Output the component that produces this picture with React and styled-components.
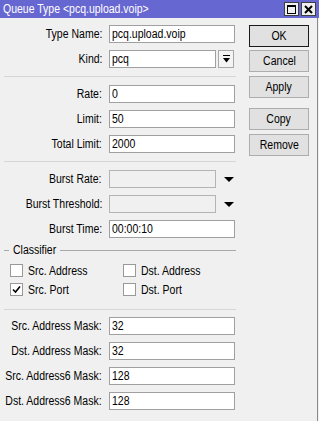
import React from "react";
import styled, { createGlobalStyle } from "styled-components";

const GlobalStyle = createGlobalStyle`
  html, body { margin: 0; padding: 0; background: #f0f0f0; }
  body {
    font-family: "Liberation Sans", Arial, sans-serif;
    font-size: 12.5px;
    color: #000;
  }
  * { box-sizing: border-box; }
`;

const Txt = styled.span`
  display: inline-block;
  white-space: nowrap;
  transform: scaleX(0.84);
  transform-origin: ${(p) => p.$origin || "left"} center;
`;

const Window = styled.div`
  width: 319px;
  height: 421px;
  display: flex;
  flex-direction: column;
  overflow: hidden;
`;

const TitleBar = styled.div`
  height: 18px;
  background: #6767d2;
  color: #fff;
  display: flex;
  align-items: center;
  padding-left: 3px;
  padding-right: 3px;
  flex-shrink: 0;
`;

const TitleText = styled.div`
  flex: 1;
  line-height: 18px;
  white-space: nowrap;
  overflow: hidden;
`;

const TitleButtons = styled.div`
  display: flex;
  gap: 2px;
`;

const TitleButton = styled.div`
  width: 15px;
  height: 14px;
  background: #f0f0f0;
  border: 1px solid #404040;
  display: flex;
  align-items: center;
  justify-content: center;
`;

const Body = styled.div`
  flex: 1;
  display: flex;
  width: 318px;
  border-right: 1px solid #8a8a8a;
`;

const Form = styled.div`
  width: 240px;
  padding-top: 7px;
  display: flex;
  flex-direction: column;
`;

const Row = styled.div`
  display: grid;
  grid-template-columns: 102px 1fr;
  column-gap: 7px;
  align-items: center;
  height: 18px;
  margin-top: ${(p) => p.$mt ?? 7}px;
`;

const Label = styled.div`
  display: flex;
  justify-content: flex-end;
  align-items: center;
  white-space: nowrap;
  height: 18px;
`;

const Field = styled.div`
  display: flex;
  align-items: center;
  gap: 2px;
`;

const TextBox = styled.div`
  width: ${(p) => p.$w}px;
  height: 18px;
  border: 1px solid ${(p) => (p.$disabled ? "#b4b4b4" : "#a0a0a0")};
  background: ${(p) => (p.$disabled ? "#f0f0f0" : "#fff")};
  padding: 0 2px;
  line-height: 16px;
  white-space: nowrap;
  overflow: hidden;
`;

const DropButton = styled.div`
  width: 16px;
  height: 18px;
  border: 1px solid #a8a8a8;
  background: #f4f4f4;
  display: flex;
  align-items: center;
  justify-content: center;
`;

const ArrowSlot = styled.div`
  width: 18px;
  height: 18px;
  display: flex;
  align-items: center;
  justify-content: center;
  padding-left: 3px;
`;

const Separator = styled.div`
  height: 1px;
  margin: ${(p) => p.$m || "8px 0 8px 4px"};
  width: 232px;
  background: #d6d6d6;
`;

const GroupHeader = styled.div`
  display: flex;
  align-items: center;
  height: 14px;
  margin-top: 5px;
  padding-left: 4px;
  width: 236px;
`;

const GroupLine = styled.div`
  height: 1px;
  background: #a8a8a8;
  width: ${(p) => (p.$grow ? "auto" : "5px")};
  flex: ${(p) => (p.$grow ? 1 : "none")};
`;

const GroupTitle = styled.div`
  padding: 0 4px;
  line-height: 14px;
  width: 51px;
`;

const CheckGrid = styled.div`
  display: grid;
  grid-template-columns: 113px 1fr;
  grid-auto-rows: 19px;
  padding-left: 10px;
  margin-top: 4px;
`;

const CheckItem = styled.div`
  display: flex;
  align-items: center;
  gap: 5px;
  white-space: nowrap;
`;

const Box = styled.div`
  width: 13px;
  height: 13px;
  flex-shrink: 0;
  border: 1px solid #999;
  background: #fff;
  display: flex;
  align-items: center;
  justify-content: center;
`;

const ButtonColumn = styled.div`
  margin-left: 9px;
  width: 60px;
  padding-top: 7px;
  display: flex;
  flex-direction: column;
`;

const Button = styled.div`
  height: 22px;
  margin-top: ${(p) => p.$mt || 0}px;
  border: 1px solid ${(p) => (p.$default ? "#1a1a1a" : "#adadad")};
  background: #e1e1e1;
  display: flex;
  align-items: center;
  justify-content: center;
  white-space: nowrap;
`;

const MaxIcon = () => (
  <svg width="9" height="9" viewBox="0 0 9 9">
    <rect x="0.5" y="0.5" width="8" height="8" fill="none" stroke="#000" />
    <rect x="0" y="0" width="9" height="2" fill="#000" />
  </svg>
);

const CloseIcon = () => (
  <svg width="9" height="9" viewBox="0 0 9 9">
    <path d="M1 1 L8 8 M8 1 L1 8" stroke="#000" strokeWidth="2" />
  </svg>
);

const DropIcon = () => (
  <svg width="7" height="8" viewBox="0 0 7 8">
    <rect x="0" y="0" width="7" height="1" fill="#000" />
    <polygon points="0,3 7,3 3.5,7.5" fill="#000" />
  </svg>
);

const Triangle = () => (
  <svg width="10" height="5" viewBox="0 0 10 5">
    <polygon points="0,0 10,0 5,5" fill="#000" />
  </svg>
);

const Check = () => (
  <svg width="9" height="9" viewBox="0 0 9 9">
    <path d="M1 4.5 L3.5 7 L8 1.5" fill="none" stroke="#000" strokeWidth="1.6" />
  </svg>
);

const FieldLabel = ({ children }) => (
  <Label>
    <Txt $origin="right">{children}</Txt>
  </Label>
);

const TextRow = ({ label, value, mt }) => (
  <Row $mt={mt}>
    <FieldLabel>{label}</FieldLabel>
    <Field>
      <TextBox $w={126}>
        <Txt>{value}</Txt>
      </TextBox>
    </Field>
  </Row>
);

const DisabledRow = ({ label, mt }) => (
  <Row $mt={mt}>
    <FieldLabel>{label}</FieldLabel>
    <Field>
      <TextBox $w={107} $disabled />
      <ArrowSlot>
        <Triangle />
      </ArrowSlot>
    </Field>
  </Row>
);

const CheckBox = ({ label, checked }) => (
  <CheckItem>
    <Box>{checked && <Check />}</Box>
    <Txt>{label}</Txt>
  </CheckItem>
);

export default function App() {
  return (
    <>
      <GlobalStyle />
      <Window>
        <TitleBar>
          <TitleText>
            <Txt>Queue Type &lt;pcq.upload.voip&gt;</Txt>
          </TitleText>
          <TitleButtons>
            <TitleButton>
              <MaxIcon />
            </TitleButton>
            <TitleButton>
              <CloseIcon />
            </TitleButton>
          </TitleButtons>
        </TitleBar>
        <Body>
          <Form>
            <TextRow label="Type Name:" value="pcq.upload.voip" mt={0} />
            <Row>
              <FieldLabel>Kind:</FieldLabel>
              <Field>
                <TextBox $w={107}>
                  <Txt>pcq</Txt>
                </TextBox>
                <DropButton>
                  <DropIcon />
                </DropButton>
              </Field>
            </Row>
            <Separator />
            <TextRow label="Rate:" value="0" mt={0} />
            <TextRow label="Limit:" value="50" />
            <TextRow label="Total Limit:" value="2000" />
            <Separator />
            <DisabledRow label="Burst Rate:" mt={0} />
            <DisabledRow label="Burst Threshold:" />
            <TextRow label="Burst Time:" value="00:00:10" />
            <GroupHeader>
              <GroupLine />
              <GroupTitle>
                <Txt>Classifier</Txt>
              </GroupTitle>
              <GroupLine $grow />
            </GroupHeader>
            <CheckGrid>
              <CheckBox label="Src. Address" />
              <CheckBox label="Dst. Address" />
              <CheckBox label="Src. Port" checked />
              <CheckBox label="Dst. Port" />
            </CheckGrid>
            <Separator $m="10px 0 7px 4px" />
            <TextRow label="Src. Address Mask:" value="32" mt={0} />
            <TextRow label="Dst. Address Mask:" value="32" />
            <TextRow label="Src. Address6 Mask:" value="128" />
            <TextRow label="Dst. Address6 Mask:" value="128" />
          </Form>
          <ButtonColumn>
            <Button $default>
              <Txt $origin="center">OK</Txt>
            </Button>
            <Button $mt={3}>
              <Txt $origin="center">Cancel</Txt>
            </Button>
            <Button $mt={4}>
              <Txt $origin="center">Apply</Txt>
            </Button>
            <Button $mt={10}>
              <Txt $origin="center">Copy</Txt>
            </Button>
            <Button $mt={4}>
              <Txt $origin="center">Remove</Txt>
            </Button>
          </ButtonColumn>
        </Body>
      </Window>
    </>
  );
}
